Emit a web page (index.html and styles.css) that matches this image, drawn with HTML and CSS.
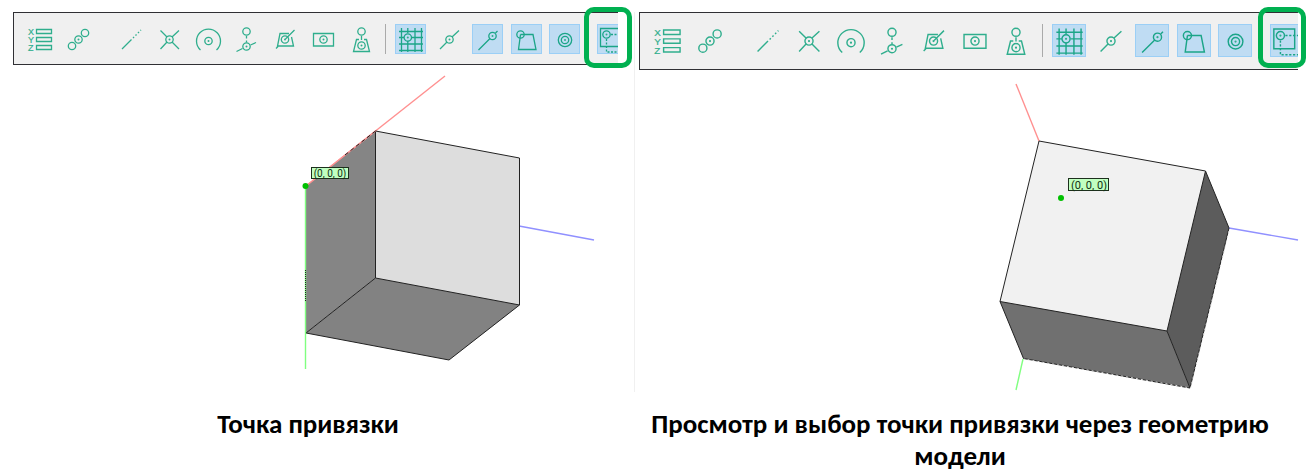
FILE: index.html
```
<!DOCTYPE html>
<html lang="ru">
<head>
<meta charset="utf-8">
<title>Точка привязки</title>
<link rel="stylesheet" href="styles.css">
</head>
<body>
<svg class="sprite" aria-hidden="true">
  <symbol id="target" viewBox="0 0 10 10"><circle cx="5" cy="5" r="3.7"/><circle class="dot" cx="5" cy="5" r="1"/></symbol>
  <symbol id="chain" viewBox="0 0 31 30"><circle cx="9" cy="22" r="3.7"/><use href="#target" x="10.5" y="10.5" width="10" height="10"/><circle cx="22" cy="9" r="3.7"/></symbol>
  <symbol id="extend" viewBox="0 0 31 30"><path d="M6 25l9.500-9.500"/><path d="M17 14l8-8" stroke-dasharray="1.500 2"/></symbol>
  <symbol id="cross" viewBox="0 0 31 30"><path d="M6.500 6.500l6.500 6.500M18 18l7 7M25 6.500l-7 6.500M13 18l-6.500 7"/><use href="#target" x="10.5" y="10.5" width="10" height="10"/></symbol>
  <symbol id="arc" viewBox="0 0 31 30"><path d="M7.500 26A12 12 0 1 1 23.500 26"/><use href="#target" x="10.500" y="12" width="10" height="10"/></symbol>
  <symbol id="perp" viewBox="0 0 31 30"><circle cx="15.500" cy="7.500" r="3.7"/><path d="M15.500 12v2.500M15.500 16.500v2M5.500 27.500l6-3M19.500 21l5.500-2.500"/><use href="#target" x="10.500" y="17.500" width="10" height="10"/></symbol>
  <symbol id="plane" viewBox="0 0 31 30"><path d="M20 9.500h-9l-2.500 12.500h16l-2-9M25.500 6l-9 9M9 22.500l-2 2"/><use href="#target" x="11" y="10.500" width="10" height="10"/></symbol>
  <symbol id="rect" viewBox="0 0 31 30"><path d="M5.500 9.500h20v12.500h-20z"/><use href="#target" x="10.500" y="10.500" width="10" height="10"/></symbol>
  <symbol id="project" viewBox="0 0 31 30"><circle cx="15.500" cy="7.500" r="3.7"/><path d="M15.500 12v4M13 15.500h-2.500l-3 12h16l-3-12h-2.500"/><use href="#target" x="10.500" y="16.500" width="10" height="10"/></symbol>
  <symbol id="grid" viewBox="0 0 31 30"><path d="M6.500 4v24M20 4v24M26.500 4v24M4 7.500h24M4 20h24M4 26.500h24M12.800 4v5M12.800 17v11M4 13.500h5M17 13.500h11"/><use href="#target" x="7.800" y="8.500" width="10" height="10"/></symbol>
  <symbol id="mid" viewBox="0 0 31 30"><path d="M6 25l7-7M18 13l7-6.500"/><use href="#target" x="10.500" y="10.500" width="10" height="10"/></symbol>
  <symbol id="end" viewBox="0 0 31 30"><path d="M6.500 26L18 14.500M23.500 9l2-2"/><use href="#target" x="15.500" y="7" width="10" height="10"/></symbol>
  <symbol id="vertex" viewBox="0 0 31 30"><circle cx="9.500" cy="10.500" r="3.7"/><path d="M9.500 10.500h12.500l3 15h-17.500l2-15"/></symbol>
  <symbol id="center" viewBox="0 0 31 30"><circle cx="16" cy="16" r="6.700"/><use href="#target" x="11" y="11" width="10" height="10"/></symbol>
  <symbol id="origin" viewBox="0 0 31 30"><path d="M3.500 4.500h19v18h-19z"/><use href="#target" x="4.500" y="5.500" width="10" height="10"/><path stroke-dasharray="2 1.500" d="M14 10.500h16M9.500 15v13h20"/></symbol>
</svg>

<main class="comparison">
  <figure class="panel">
    <div class="tools">
      <div class="bar">
        <div class="group pair">
          <button class="tool" aria-label="Координаты"><svg viewBox="0 0 31 30"><text x="3" y="11">X</text><text x="3" y="19">Y</text><text x="3" y="27">Z</text><path d="M11.5 5.5h15v4h-15zM11.5 13.5h15v4h-15zM11.5 21.5h15v4h-15z"/></svg></button>
          <button class="tool" aria-label="Цепочка точек"><svg><use href="#chain"/></svg></button>
        </div>
        <div class="group snaps">
          <button class="tool" aria-label="Продолжение"><svg><use href="#extend"/></svg></button>
          <button class="tool" aria-label="Пересечение"><svg><use href="#cross"/></svg></button>
          <button class="tool" aria-label="Центр дуги"><svg><use href="#arc"/></svg></button>
          <button class="tool" aria-label="Перпендикуляр"><svg><use href="#perp"/></svg></button>
          <button class="tool" aria-label="Плоскость"><svg><use href="#plane"/></svg></button>
          <button class="tool" aria-label="Центр грани"><svg><use href="#rect"/></svg></button>
          <button class="tool" aria-label="Проекция"><svg><use href="#project"/></svg></button>
        </div>
        <div class="divider"></div>
        <div class="group modes">
          <button class="tool on" aria-label="Сетка"><svg><use href="#grid"/></svg></button>
          <button class="tool" aria-label="Середина"><svg><use href="#mid"/></svg></button>
          <button class="tool on" aria-label="Конец"><svg><use href="#end"/></svg></button>
          <button class="tool on" aria-label="Вершина"><svg><use href="#vertex"/></svg></button>
          <button class="tool on" aria-label="Центр"><svg><use href="#center"/></svg></button>
        </div>
        <button class="tool on" aria-label="Точка привязки"><svg><use href="#origin"/></svg></button>
      </div>
      <div class="highlight"></div>
    </div>
    <svg class="scene" viewBox="0 65 634 327" role="img" aria-label="Куб, точка привязки в вершине">
      <path class="red" d="M306 186L445 76"/>
      <path class="blue" d="M519 226L594 240"/>
      <path fill="#858585" d="M306 186L375.500 131V278L306 333z"/>
      <path fill="#ddd" d="M375.500 131L519.500 158V305L375.500 278z"/>
      <path fill="#828282" d="M375.500 278L519.500 305L449 360L306 333z"/>
      <path class="edge" d="M375.500 131L519.500 158V305L449 360L306 333L375.500 278V131M375.500 278L519.500 305"/>
      <path class="red" d="M306 186L375.500 131"/>
      <path class="edge" stroke-dasharray="4 3" d="M345 155L375.500 131"/>
      <path class="green" d="M305.500 186V369"/>
      <path class="edge" stroke-dasharray="1 1" d="M305.500 270V302"/>
      <circle class="point" cx="305.500" cy="186" r="3"/>
      <rect class="tag" x="311.500" y="167.500" width="37" height="11"/>
      <text class="coord" x="330" y="177">(0, 0, 0)</text>
    </svg>
    <figcaption>Точка привязки</figcaption>
  </figure>

  <figure class="panel large">
    <div class="tools">
      <div class="bar">
        <div class="group pair">
          <button class="tool" aria-label="Координаты"><svg viewBox="0 0 31 30"><text x="3" y="11">X</text><text x="3" y="19">Y</text><text x="3" y="27">Z</text><path d="M11.5 5.5h15v4h-15zM11.5 13.5h15v4h-15zM11.5 21.5h15v4h-15z"/></svg></button>
          <button class="tool" aria-label="Цепочка точек"><svg><use href="#chain"/></svg></button>
        </div>
        <div class="group snaps">
          <button class="tool" aria-label="Продолжение"><svg><use href="#extend"/></svg></button>
          <button class="tool" aria-label="Пересечение"><svg><use href="#cross"/></svg></button>
          <button class="tool" aria-label="Центр дуги"><svg><use href="#arc"/></svg></button>
          <button class="tool" aria-label="Перпендикуляр"><svg><use href="#perp"/></svg></button>
          <button class="tool" aria-label="Плоскость"><svg><use href="#plane"/></svg></button>
          <button class="tool" aria-label="Центр грани"><svg><use href="#rect"/></svg></button>
          <button class="tool" aria-label="Проекция"><svg><use href="#project"/></svg></button>
        </div>
        <div class="divider"></div>
        <div class="group modes">
          <button class="tool on" aria-label="Сетка"><svg><use href="#grid"/></svg></button>
          <button class="tool" aria-label="Середина"><svg><use href="#mid"/></svg></button>
          <button class="tool on" aria-label="Конец"><svg><use href="#end"/></svg></button>
          <button class="tool on" aria-label="Вершина"><svg><use href="#vertex"/></svg></button>
          <button class="tool on" aria-label="Центр"><svg><use href="#center"/></svg></button>
        </div>
        <button class="tool on" aria-label="Точка привязки"><svg><use href="#origin"/></svg></button>
      </div>
      <div class="highlight"></div>
    </div>
    <svg class="scene" viewBox="635 70 681 322" role="img" aria-label="Куб, точка привязки на грани">
      <path class="red" d="M1016 84L1039 141"/>
      <path class="blue" d="M1229 228L1298 240"/>
      <path class="green" d="M1023 359L1016 390"/>
      <path fill="#f1f1f1" d="M1039 141L1205.500 171L1167 331L1000 301.500z"/>
      <path fill="#707070" d="M1000 301.500L1167 331L1190 388L1023.500 358.500z"/>
      <path fill="#5c5c5c" d="M1205.500 171L1229 228L1190 388L1167 331z"/>
      <path class="edge" d="M1023.500 358.500L1000 301.500L1039 141L1205.500 171L1229 228L1190 388L1023.500 358.500M1000 301.500L1167 331L1205.500 171M1167 331L1190 388"/>
      <path class="glint" d="M1229 231L1190.500 388L1024 359"/>
      <circle class="point" cx="1061" cy="198" r="3"/>
      <rect class="tag" x="1068.500" y="178.500" width="40" height="12"/>
      <text class="coord" x="1089" y="189">(0, 0, 0)</text>
    </svg>
    <figcaption>Просмотр и выбор точки привязки через геометрию модели</figcaption>
  </figure>
</main>
</body>
</html>
```
FILE: styles.css
```
* { box-sizing: border-box; }
body { margin: 0; background: #fff; color: #000; }
.sprite { position: absolute; width: 0; height: 0; }

.comparison { display: grid; grid-template-columns: 634fr 682fr; }
.panel { --w: 31px; --h: 30px; margin: 0; padding-top: 12px; min-width: 0; }
.large { --w: 34px; --h: 33px; }

.tools { position: relative; margin: 0 16px 0 13px; }
.large .tools { margin: 0 18px 0 0; padding-left: 4px; border-left: 1px solid #f0f0f0; }
.bar {
  display: flex; align-items: center; overflow: hidden;
  height: 53px; padding-left: 11px;
  background: #f0f0f0; border: solid #303034; border-width: 1px 0 1px 1px;
}
.large .bar { height: 58px; padding-bottom: 1px; }
.group { display: flex; justify-content: space-between; flex: none; }
.pair { width: 69px; margin-right: 22px; }
.snaps { width: 261px; margin-right: 8px; }
.modes { width: 185px; margin: 0 17px 0 9px; }
.large .pair { width: 76px; margin-right: 24px; }
.large .snaps { width: 282px; margin-right: 9px; }
.large .modes { width: 200px; margin: 0 18px 0 9px; }
.divider { flex: none; width: 1px; height: var(--h); background: #aaa; }
.tool {
  flex: none; width: var(--w); height: var(--h); margin: 0; padding: 0;
  display: block; background: none; border: 0;
}
.on { background: #bfdcf3; box-shadow: inset 0 0 0 1px #9bcff6; }
.tool svg { display: block; width: 100%; height: 100%; fill: none; stroke: #2fae8d; stroke-width: 1.3; }
.on svg { stroke: #1ba588; }
.dot { fill: #2fae8d; stroke: none; }
.tool text { font: 9px "Liberation Sans", Arial, sans-serif; fill: #2fae8d; stroke: #2fae8d; stroke-width: 0.2; }
.highlight {
  position: absolute; top: -5px; right: -14px; width: 48px; height: 61px;
  border: 5px solid #00b050; border-radius: 10px;
}
.large .highlight { right: -8px; }

.scene { display: block; width: 100%; height: auto; fill: none; }
.large .scene { border-left: 1px solid #f0f0f0; }
.edge { stroke: #222; stroke-width: 1; }
.red { stroke: #ff9090; stroke-width: 1.4; }
.green { stroke: #80ff80; stroke-width: 1.4; }
.blue { stroke: #9090ff; stroke-width: 1.4; }
.glint { stroke: #ddd; stroke-width: 1; stroke-dasharray: 2 3; }
.point { fill: #00c000; }
.tag { fill: #c0ffc0; stroke: #1c301c; }
.coord { font: 10px Roboto, sans-serif; fill: #103010; text-anchor: middle; }
.large .coord { font-size: 11px; }

figcaption {
  margin-top: 16px; padding: 0 18px 0 0;
  font: bold 27px/32px Carlito, Calibri, sans-serif; text-align: center;
}
.large figcaption { padding: 0 30px 0 0; }
```
